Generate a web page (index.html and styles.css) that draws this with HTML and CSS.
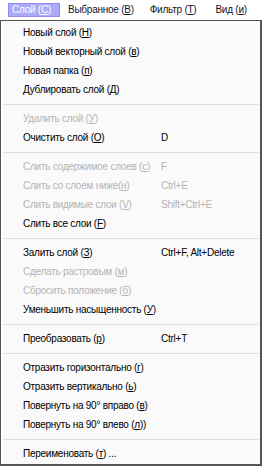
FILE: index.html
```html
<!DOCTYPE html>
<html lang="ru">
<head>
<meta charset="utf-8">
<link rel="stylesheet" href="styles.css">
</head>
<body>
<div class="menubar">
  <span class="top active">Слой (<u>С</u>)</span>
  <span class="top">Выбранное (<u>В</u>)</span>
  <span class="top">Фильтр (<u>Т</u>)</span>
  <span class="top last">Вид (<u>и</u>)</span>
</div>
<div class="menu">
  <div class="item"><span>Новый слой (<u>Н</u>)</span><span></span></div>
  <div class="item"><span>Новый векторный слой (<u>в</u>)</span><span></span></div>
  <div class="item"><span>Новая папка (<u>п</u>)</span><span></span></div>
  <div class="item"><span>Дублировать слой (<u>Д</u>)</span><span></span></div>
  <div class="sep"></div>
  <div class="item off"><span>Удалить слой (<u>У</u>)</span><span></span></div>
  <div class="item"><span>Очистить слой (<u>О</u>)</span><span>D</span></div>
  <div class="sep"></div>
  <div class="item off"><span>Слить содержимое слоев (<u>с</u>)</span><span>F</span></div>
  <div class="item off"><span>Слить со слоем ниже(<u>н</u>)</span><span>Ctrl+E</span></div>
  <div class="item off"><span>Слить видимые слои (<u>V</u>)</span><span>Shift+Ctrl+E</span></div>
  <div class="item"><span>Слить все слои (<u>F</u>)</span><span></span></div>
  <div class="sep"></div>
  <div class="item"><span>Залить слой (<u>З</u>)</span><span>Ctrl+F, Alt+Delete</span></div>
  <div class="item off"><span>Сделать растровым (<u>м</u>)</span><span></span></div>
  <div class="item off"><span>Сбросить положение (<u>б</u>)</span><span></span></div>
  <div class="item"><span>Уменьшить насыщенность (<u>У</u>)</span><span></span></div>
  <div class="sep"></div>
  <div class="item"><span>Преобразовать (<u>р</u>)</span><span>Ctrl+T</span></div>
  <div class="sep"></div>
  <div class="item"><span>Отразить горизонтально (<u>г</u>)</span><span></span></div>
  <div class="item"><span>Отразить вертикально (<u>ь</u>)</span><span></span></div>
  <div class="item"><span>Повернуть на 90° вправо (<u>в</u>)</span><span></span></div>
  <div class="item"><span>Повернуть на 90° влево (<u>л</u>))</span><span></span></div>
  <div class="sep"></div>
  <div class="item"><span>Переименовать (<u>т</u>) ...</span><span></span></div>
</div>
</body>
</html>
```
FILE: styles.css
```css
html, body {
  margin: 0;
  padding: 0;
  background: #ffffff;
}
body {
  width: 263px;
  height: 466px;
  overflow: hidden;
  font-family: "Liberation Sans", Arial, sans-serif;
  font-size: 10px;
  letter-spacing: -0.25px;
  color: #111111;
}
u {
  text-decoration: underline;
  text-underline-offset: 1px;
}
.menubar {
  display: flex;
  align-items: flex-start;
  height: 20px;
  padding-left: 8px;
  box-sizing: border-box;
}
.top {
  margin-top: 3px;
  height: 14px;
  line-height: 12px;
  padding: 0 3px;
  border: 1px solid transparent;
  box-sizing: border-box;
  color: #141428;
  white-space: nowrap;
}
.top + .top {
  margin-left: 8px;
}
.top.last {
  margin-left: 11px;
}
.top.active {
  padding-right: 8px;
  background: #aaaaf8;
  border-color: #8e8ef0;
  color: #ffffff;
}
.top.active + .top {
  margin-left: 4px;
}
.menu {
  height: 446px;
  box-sizing: border-box;
  border-style: solid;
  border-color: #555555;
  border-width: 1px 2px 2px 1px;
  width: 262px;
  background: #fafafa;
  padding-top: 2px;
}
.item {
  display: grid;
  grid-template-columns: 138px auto;
  height: 19px;
  line-height: 19px;
  padding-left: 22px;
  white-space: nowrap;
  color: #000000;
}
.item.off {
  color: #b4b4b4;
}
.sep {
  height: 1px;
  margin: 5px 1px 4px 2px;
  background: #dcdcdc;
}
```
